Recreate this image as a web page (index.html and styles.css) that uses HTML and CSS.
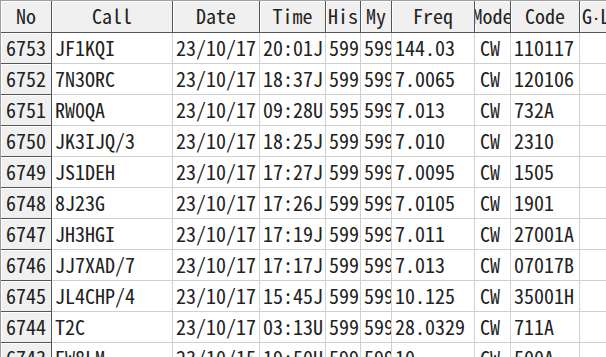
FILE: index.html
```html
<!DOCTYPE html>
<html lang="ja">
<head>
    <meta charset="UTF-8" />
    <meta name="viewport" content="width=device-width, initial-scale=1.0" />
    <title>QSO Log</title>
    <link rel="stylesheet" href="styles.css">
</head>

<body>
    <!-- Log grid: fixed No column + header row -->
    <div class="grid">
        <div class="hd"><span>No</span></div>
        <div class="hd"><span>Call</span></div>
        <div class="hd"><span>Date</span></div>
        <div class="hd"><span>Time</span></div>
        <div class="hd"><span>His</span></div>
        <div class="hd"><span>My</span></div>
        <div class="hd"><span>Freq</span></div>
        <div class="hd"><span>Mode</span></div>
        <div class="hd"><span>Code</span></div>
        <div class="hd hd-left"><span>G<span class="dot">·</span>L</span></div>

        <div class="no">6753</div><div class="c">JF1KQI</div><div class="c">23/10/17</div><div class="c">20:01J</div><div class="c">599</div><div class="c">599</div><div class="c">144.03</div><div class="c mode">CW</div><div class="c">110117</div><div class="c"></div>
        <div class="no">6752</div><div class="c">7N3ORC</div><div class="c">23/10/17</div><div class="c">18:37J</div><div class="c">599</div><div class="c">599</div><div class="c">7.0065</div><div class="c mode">CW</div><div class="c">120106</div><div class="c"></div>
        <div class="no">6751</div><div class="c">RW0QA</div><div class="c">23/10/17</div><div class="c">09:28U</div><div class="c">595</div><div class="c">599</div><div class="c">7.013</div><div class="c mode">CW</div><div class="c">732A</div><div class="c"></div>
        <div class="no">6750</div><div class="c">JK3IJQ/3</div><div class="c">23/10/17</div><div class="c">18:25J</div><div class="c">599</div><div class="c">599</div><div class="c">7.010</div><div class="c mode">CW</div><div class="c">2310</div><div class="c"></div>
        <div class="no">6749</div><div class="c">JS1DEH</div><div class="c">23/10/17</div><div class="c">17:27J</div><div class="c">599</div><div class="c">599</div><div class="c">7.0095</div><div class="c mode">CW</div><div class="c">1505</div><div class="c"></div>
        <div class="no">6748</div><div class="c">8J23G</div><div class="c">23/10/17</div><div class="c">17:26J</div><div class="c">599</div><div class="c">599</div><div class="c">7.0105</div><div class="c mode">CW</div><div class="c">1901</div><div class="c"></div>
        <div class="no">6747</div><div class="c">JH3HGI</div><div class="c">23/10/17</div><div class="c">17:19J</div><div class="c">599</div><div class="c">599</div><div class="c">7.011</div><div class="c mode">CW</div><div class="c">27001A</div><div class="c"></div>
        <div class="no">6746</div><div class="c">JJ7XAD/7</div><div class="c">23/10/17</div><div class="c">17:17J</div><div class="c">599</div><div class="c">599</div><div class="c">7.013</div><div class="c mode">CW</div><div class="c">07017B</div><div class="c"></div>
        <div class="no">6745</div><div class="c">JL4CHP/4</div><div class="c">23/10/17</div><div class="c">15:45J</div><div class="c">599</div><div class="c">599</div><div class="c">10.125</div><div class="c mode">CW</div><div class="c">35001H</div><div class="c"></div>
        <div class="no">6744</div><div class="c">T2C</div><div class="c">23/10/17</div><div class="c">03:13U</div><div class="c">599</div><div class="c">599</div><div class="c">28.0329</div><div class="c mode">CW</div><div class="c">711A</div><div class="c"></div>
        <div class="no">6743</div><div class="c">EW8LM</div><div class="c">23/10/15</div><div class="c">19:50U</div><div class="c">599</div><div class="c">599</div><div class="c">10</div><div class="c mode">CW</div><div class="c">500A</div><div class="c"></div>
    </div>
</body>
</html>
```

FILE: styles.css
```css
/* Basic reset */
body {
    margin: 0;
    padding: 0;
    background: #fff;
    overflow: hidden;
    font-family: "Noto Sans Mono CJK JP", "Noto Sans CJK JP", monospace;
    font-feature-settings: "hwid";
    font-size: 20px;
    color: #222;
}

/* Grid: column widths match the log window */
.grid {
    display: grid;
    grid-template-columns: 51px 121px 87px 66px 35px 31px 83px 36px 69px 90px;
    grid-auto-rows: 31px;
    grid-template-rows: 32px;
    width: max-content;
    border-top: 1px solid #a0a0a0;
    border-left: 1px solid #a0a0a0;
}

/* Header cells (raised look) */
.hd,
.no {
    background: #f0f0f0;
    border-right: 1px solid #555;
    border-bottom: 1px solid #555;
    box-shadow: inset 1px 1px 0 #fff;
    overflow: hidden;
    white-space: nowrap;
    line-height: 30px;
}

.hd {
    display: flex;
    justify-content: center;
}

.hd-left {
    justify-content: flex-start;
    padding-left: 2px;
}

/* half-width middle dot */
.dot {
    display: inline-block;
    width: 8px;
    text-align: center;
    font-family: "Liberation Sans", sans-serif;
}

.no {
    text-align: center;
}

/* Data cells */
.c {
    border-right: 1px solid #d0d0d0;
    border-bottom: 1px solid #d0d0d0;
    padding-left: 3px;
    overflow: hidden;
    white-space: nowrap;
    line-height: 30px;
}

.mode {
    padding-left: 5px;
}
```
